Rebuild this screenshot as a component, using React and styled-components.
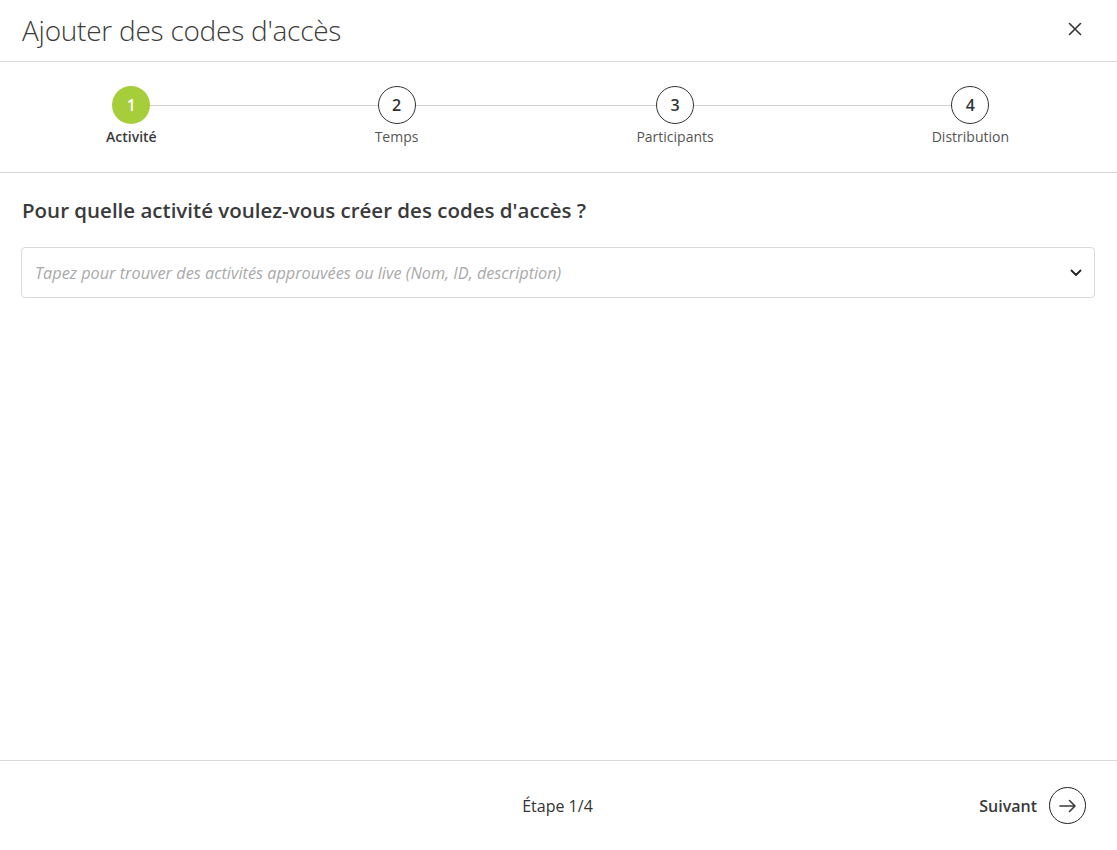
import React from 'react';
import styled, { createGlobalStyle } from 'styled-components';

const GlobalStyle = createGlobalStyle`
  html, body {
    margin: 0;
    padding: 0;
    background: #fff;
  }
  body {
    font-family: "Open Sans", "Noto Sans", sans-serif;
    color: #333;
  }
  #root {
    height: 850px;
  }
`;

const Modal = styled.div`
  display: flex;
  flex-direction: column;
  height: 850px;
  background: #fff;
`;

const Header = styled.header`
  display: flex;
  align-items: center;
  justify-content: space-between;
  height: 61px;
  padding: 0 22px;
  border-bottom: 1px solid #d9d9d9;
`;

const Title = styled.h1`
  margin: 0 0 1px;
  font-size: 28px;
  font-weight: 300;
  color: #3c3c3c;
  letter-spacing: -0.25px;
`;

const CloseButton = styled.button`
  display: flex;
  align-items: center;
  justify-content: center;
  width: 28px;
  height: 28px;
  padding: 0;
  margin: 0 6px 3px 0;
  border: none;
  background: none;
  color: #333;
  cursor: pointer;
`;

const Stepper = styled.nav`
  height: 110px;
  padding: 0 108px 0 106px;
  border-bottom: 1px solid #d9d9d9;
  display: flex;
  align-items: flex-start;
`;

const Steps = styled.ol`
  position: relative;
  flex: 1;
  display: flex;
  justify-content: space-between;
  margin: 24px 0 0;
  padding: 0;
  list-style: none;

  &::before {
    content: '';
    position: absolute;
    left: 24px;
    right: 38px;
    top: 19px;
    height: 1px;
    background: #d0d0d0;
  }
`;

const Step = styled.li`
  position: relative;
  display: flex;
  flex-direction: column;
  align-items: center;
  gap: 3px;
`;

const Bubble = styled.span`
  display: flex;
  align-items: center;
  justify-content: center;
  width: 38px;
  height: 38px;
  box-sizing: border-box;
  border-radius: 50%;
  font-size: 16px;
  font-weight: 600;
  background: ${p => (p.$active ? '#a6cd3a' : '#fff')};
  color: ${p => (p.$active ? '#fff' : '#333')};
  border: ${p => (p.$active ? 'none' : '1px solid #333')};
`;

const StepLabel = styled.span`
  font-size: 14px;
  line-height: 20px;
  color: ${p => (p.$active ? '#3a3a3a' : '#555')};
  font-weight: ${p => (p.$active ? 600 : 400)};
  white-space: nowrap;
`;

const Body = styled.main`
  flex: 1;
  padding: 23px 22px 0 21px;
`;

const Question = styled.h2`
  margin: 0 0 23px 1px;
  font-size: 20.5px;
  font-weight: 600;
  line-height: 28px;
  color: #3a3a3a;
`;

const SelectBox = styled.div`
  display: flex;
  align-items: center;
  height: 51px;
  box-sizing: border-box;
  padding: 0 12px 0 13px;
  border: 1px solid #dadada;
  border-radius: 4px;
`;

const SelectInput = styled.input`
  flex: 1;
  border: none;
  outline: none;
  padding: 0;
  font-family: inherit;
  font-size: 16.25px;
  font-style: italic;
  color: #333;
  background: transparent;

  &::placeholder {
    color: #a9a9a9;
  }
`;

const Chevron = styled.span`
  display: flex;
  color: #222;
`;

const Footer = styled.footer`
  display: grid;
  grid-template-columns: 1fr auto 1fr;
  align-items: center;
  height: 89px;
  padding: 0 31px 0 29px;
  border-top: 1px solid #d9d9d9;
`;

const StepCount = styled.span`
  grid-column: 2;
  font-size: 16px;
  color: #333;
`;

const NextButton = styled.button`
  justify-self: end;
  display: flex;
  align-items: center;
  gap: 12px;
  padding: 0;
  border: none;
  background: none;
  font-family: inherit;
  font-size: 16px;
  font-weight: 600;
  color: #3a3a3a;
  cursor: pointer;
`;

const NextCircle = styled.span`
  display: flex;
  align-items: center;
  justify-content: center;
  width: 37px;
  height: 37px;
  box-sizing: border-box;
  border: 1px solid #222;
  border-radius: 50%;
`;

const steps = ['Activité', 'Temps', 'Participants', 'Distribution'];

export default function App() {
  const current = 0;
  return (
    <>
      <GlobalStyle />
      <Modal>
        <Header>
          <Title>Ajouter des codes d'accès</Title>
          <CloseButton aria-label="Fermer">
            <svg width="14" height="14" viewBox="0 0 14 14" fill="none" stroke="currentColor" strokeWidth="1.6" strokeLinecap="round">
              <path d="M1.5 1.5 L12.5 12.5 M12.5 1.5 L1.5 12.5" />
            </svg>
          </CloseButton>
        </Header>

        <Stepper>
          <Steps>
            {steps.map((label, i) => (
              <Step key={label}>
                <Bubble $active={i === current}>{i + 1}</Bubble>
                <StepLabel $active={i === current}>{label}</StepLabel>
              </Step>
            ))}
          </Steps>
        </Stepper>

        <Body>
          <Question>Pour quelle activité voulez-vous créer des codes d'accès ?</Question>
          <SelectBox>
            <SelectInput placeholder="Tapez pour trouver des activités approuvées ou live (Nom, ID, description)" />
            <Chevron>
              <svg width="12" height="8" viewBox="0 0 12 8" fill="none" stroke="currentColor" strokeWidth="1.8" strokeLinecap="round" strokeLinejoin="round">
                <path d="M1.5 1.5 L6 6 L10.5 1.5" />
              </svg>
            </Chevron>
          </SelectBox>
        </Body>

        <Footer>
          <StepCount>Étape 1/4</StepCount>
          <NextButton>
            Suivant
            <NextCircle>
              <svg width="18" height="14" viewBox="0 0 18 14" fill="none" stroke="currentColor" strokeWidth="1.6" strokeLinecap="round" strokeLinejoin="round">
                <path d="M1 7 H16 M10.5 1.5 L16 7 L10.5 12.5" />
              </svg>
            </NextCircle>
          </NextButton>
        </Footer>
      </Modal>
    </>
  );
}
